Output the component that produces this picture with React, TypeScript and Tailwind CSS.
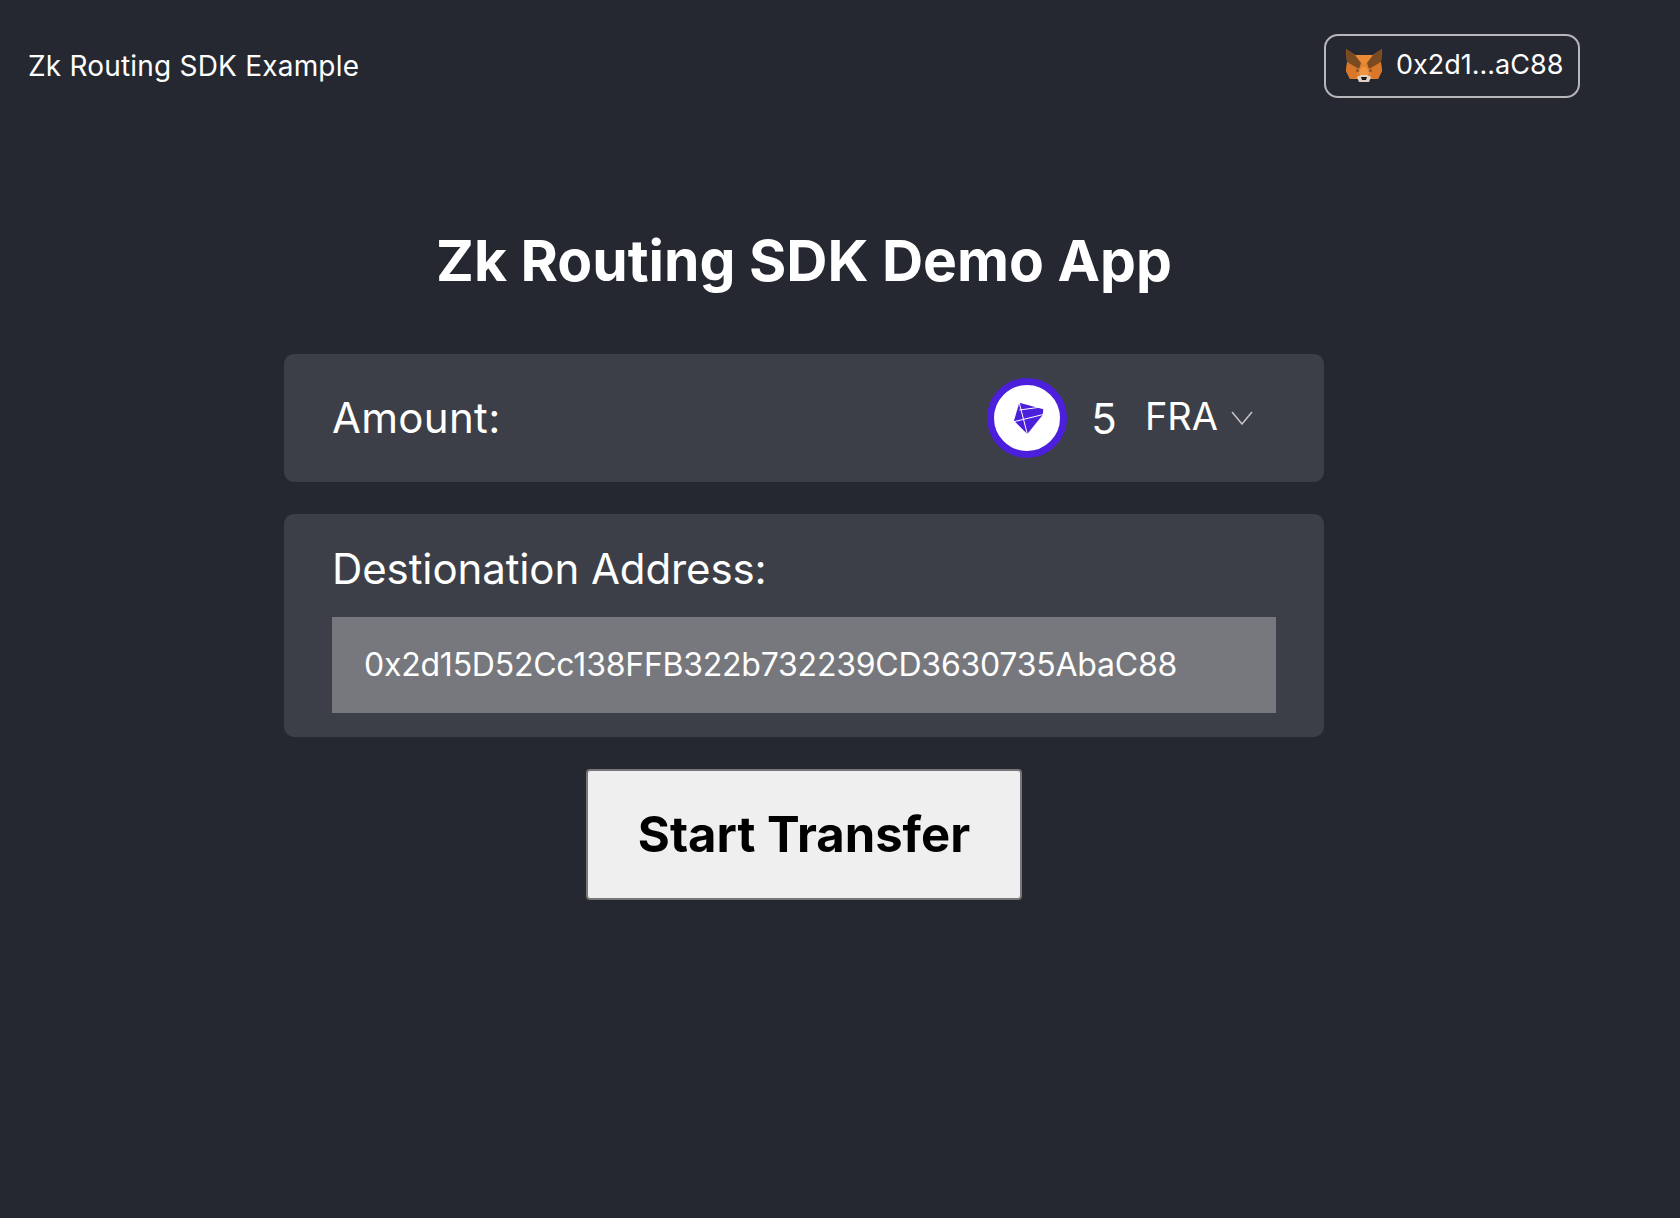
const FONT = "font-['Inter','Liberation_Sans',sans-serif]";

function Fox() {
  return (
    <svg width="36" height="34" viewBox="0 0 36 34" className="shrink-0">
      <polygon points="0,0 9,6 27,6 36,0 35,14 36,22 32,30 24,30 12,30 4,30 0,22 1,14" fill="#e2812d" />
      <polygon points="9,6 27,6 18,17" fill="#e98a36" />
      <polygon points="18,17 24,22 21,27 15,27 12,22" fill="#ef9443" />
      <polygon points="1,14 12,18 10,29 4,30 0,22" fill="#d8762a" />
      <polygon points="35,14 24,18 26,29 32,30 36,22" fill="#d8762a" />
      <polygon points="0,0 9,6 15,14 13,20 1,13" fill="#7a4a20" />
      <polygon points="36,0 27,6 21,14 23,20 35,13" fill="#7a4a20" />
      <polygon points="10,20 14,22 11,23" fill="#6b4530" />
      <polygon points="26,20 22,22 25,23" fill="#6b4530" />
      <polygon points="11,28 15,26 21,26 25,28 23,33 13,33" fill="#e0d3c6" />
      <polygon points="15,28 21,28 20,31 16,31" fill="#1e1a18" />
    </svg>
  );
}

function FraLogo() {
  return (
    <svg width="80" height="80" viewBox="0 0 80 80" className="shrink-0">
      <circle cx="40" cy="40" r="36.5" fill="#ffffff" stroke="#4b1fdb" strokeWidth="7" />
      <polygon points="32.3,24.7 56.3,31.3 55.7,37 40.3,56 27,42.7" fill="#4b1fdb" />
      <path d="M32.3 25L40.3 56M32.3 32L57 28.7M27 43.7L57 36.3" stroke="#ffffff" strokeWidth="1" fill="none" />
    </svg>
  );
}

export default function App() {
  return (
    <div className={`${FONT} min-h-[1218px] w-full bg-[#252830] text-white`}>
      <header className="flex h-[131px] items-center justify-between pl-[28px] pr-[100px]">
        <div className="text-[28px] leading-[40px] tracking-[0.2px]">Zk Routing SDK Example</div>
        <button className="flex h-[64px] w-[256px] items-center gap-[14px] rounded-[14px] border-2 border-[#b6b7ba] pl-[20px] text-[27px]">
          <Fox />
          <span>0x2d1...aC88</span>
        </button>
      </header>
      <main className="mx-auto flex w-[1040px] -translate-x-[36px] flex-col items-center">
        <h1 className="mt-[88px] h-[84px] text-[57px] font-bold leading-[84px]">Zk Routing SDK Demo App</h1>
        <section className="mt-[51px] flex h-[128px] w-full items-center rounded-[10px] bg-[#3c3f47] px-[48px]">
          <span className="flex-1 pb-[2px] text-[42px] tracking-[0.3px]">Amount:</span>
          <FraLogo />
          <span className="ml-[24px] text-[42px]">5</span>
          <span className="ml-[28px] pb-[3px] text-[38px]">FRA</span>
          <svg width="22" height="14" viewBox="0 0 22 14" className="ml-[13px] mr-[23px]">
            <path d="M1 1L11 13L21 1" stroke="#c5c6c9" strokeWidth="1.5" fill="none" />
          </svg>
        </section>
        <section className="mt-[32px] w-full rounded-[10px] bg-[#3c3f47] px-[48px] pb-[24px] pt-[27px]">
          <div className="h-[55px] text-[42px] leading-[55px] tracking-[-0.1px]">Destionation Address:</div>
          <div className="mt-[21px] flex h-[96px] items-center bg-[#77787d] px-[32px] text-[32px] tracking-[-0.23px]">
            0x2d15D52Cc138FFB322b732239CD3630735AbaC88
          </div>
        </section>
        <button className="mt-[32px] h-[131px] w-[436px] rounded-[4px] border-2 border-[#767676] bg-[#efefef] text-[49px] font-bold text-black">
          Start Transfer
        </button>
      </main>
    </div>
  );
}
